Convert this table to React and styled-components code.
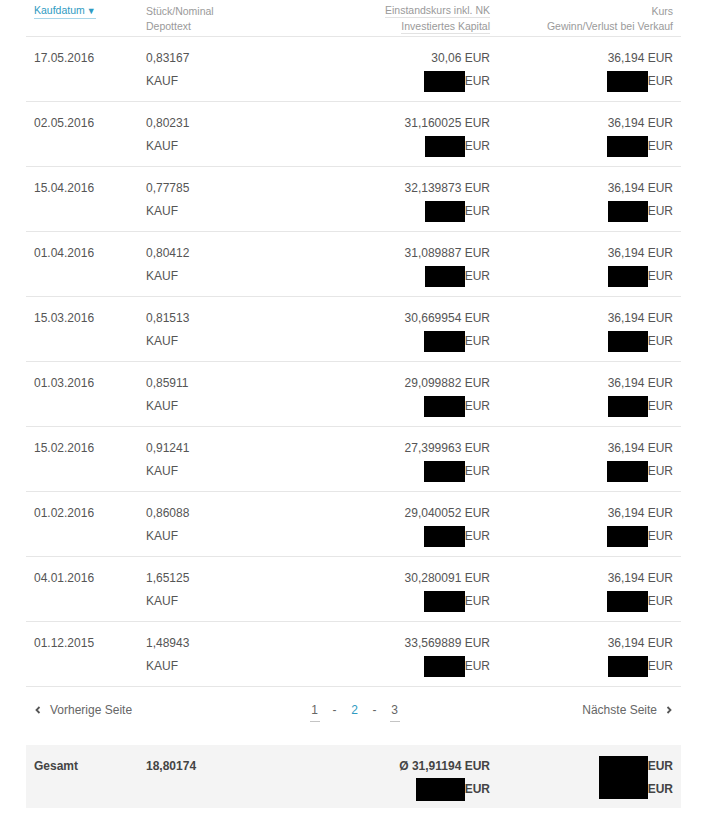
import styled, { createGlobalStyle } from "styled-components";

const Global = createGlobalStyle`
   body{
      margin: 0;
      background: #fff;
      font-family: "Liberation Sans", Arial, sans-serif;
      color: #555;
   }
`;

const Wrap = styled.div`
   width: 655px;
   margin-left: 26px;
`;

const Grid = styled.div`
   display: grid;
   grid-template-columns: 112px 160px 1fr 183px;
   padding: 0 8px;
`;

const HeadRow = styled(Grid)`
   height: 36px;
   border-bottom: 1px solid #e6e6e6;
   font-size: 10.5px;
   color: #9a9a9a;
`;

const HeadCell = styled.div`
   display: flex;
   flex-direction: column;
   align-items: ${p => p.$right ? "flex-end" : "flex-start"};
   padding-top: 4px;
   line-height: 15px;
`;

const SortLabel = styled.span`
   color: ${p => p.$active ? "#2f9bc2" : "#9a9a9a"};
   border-bottom: 1px solid ${p => p.$active ? "#a9d6e8" : "#e2e2e2"};
   line-height: 13px;
   margin-bottom: ${p => p.$active ? "0" : "2px"};
   & .arrow{
      font-size: 9px;
      margin-left: 2px;
   }
`;

const Row = styled(Grid)`
   border-bottom: 1px solid #e6e6e6;
   font-size: 12px;
   padding-top: 10px;
   box-sizing: border-box;
   height: 65px;
`;

const Cell = styled.div`
   display: flex;
   flex-direction: column;
   align-items: ${p => p.$right ? "flex-end" : "flex-start"};
   gap: 1px;
   & > span{
      height: 22px;
      line-height: 22px;
      display: flex;
      align-items: center;
   }
`;

const Redact = styled.i`
   display: inline-block;
   width: ${p => p.$w || 41}px;
   height: ${p => p.$h || 21}px;
   background: #000;
`;

const Pager = styled.div`
   display: flex;
   align-items: center;
   justify-content: space-between;
   height: 46px;
   padding: 0 8px;
   font-size: 12px;
   color: #666;
   margin-bottom: 12px;
`;

const PagerLink = styled.span`
   display: flex;
   align-items: center;
   gap: 8px;
   width: 160px;
   justify-content: ${p => p.$right ? "flex-end" : "flex-start"};
   & svg{
      width: 8px;
      height: 8px;
   }
`;

const Pages = styled.div`
   display: flex;
   gap: 12px;
   margin-left: 2px;
`;

const PageNum = styled.span`
   width: 8px;
   text-align: center;
   color: ${p => p.$current ? "#2f9bc2" : "#666"};
   position: relative;
   ${p => p.$link && `
      &::after{
         content: "";
         position: absolute;
         left: -1px;
         right: -1px;
         bottom: -5px;
         border-bottom: 1px solid #c4c4c4;
      }
   `}
`;

const Total = styled(Grid)`
   background: #f4f4f4;
   height: 63px;
   padding-top: 10px;
   box-sizing: border-box;
   font-size: 12px;
   font-weight: bold;
   color: #444;
`;

const TotalCell = styled(Cell)``;

const BigBox = styled.div`
   display: flex;
   align-items: center;
   & > div{
      display: flex;
      flex-direction: column;
      gap: 1px;
   }
   & span{
      height: 22px;
      line-height: 22px;
   }
`;

const rows = [
   ["17.05.2016", "0,83167", "30,06 EUR", 41, 41],
   ["02.05.2016", "0,80231", "31,160025 EUR", 40, 41],
   ["15.04.2016", "0,77785", "32,139873 EUR", 40, 40],
   ["01.04.2016", "0,80412", "31,089887 EUR", 40, 40],
   ["15.03.2016", "0,81513", "30,669954 EUR", 41, 40],
   ["01.03.2016", "0,85911", "29,099882 EUR", 41, 40],
   ["15.02.2016", "0,91241", "27,399963 EUR", 41, 41],
   ["01.02.2016", "0,86088", "29,040052 EUR", 41, 41],
   ["04.01.2016", "1,65125", "30,280091 EUR", 41, 41],
   ["01.12.2015", "1,48943", "33,569889 EUR", 41, 40],
];

const Chevron = ({ dir }) => (
   <svg viewBox="0 0 8 8">
      <path d={dir === "left" ? "M5.5 1 L2.5 4 L5.5 7" : "M2.5 1 L5.5 4 L2.5 7"} fill="none" stroke="#555" strokeWidth="1.8" />
   </svg>
);

export default function App() {
   return (
      <Wrap>
         <Global />
         <HeadRow>
            <HeadCell>
               <SortLabel $active>Kaufdatum<span className="arrow">▼</span></SortLabel>
            </HeadCell>
            <HeadCell>
               <span>Stück/Nominal</span>
               <span>Depottext</span>
            </HeadCell>
            <HeadCell $right>
               <SortLabel>Einstandskurs inkl. NK</SortLabel>
               <SortLabel>Investiertes Kapital</SortLabel>
            </HeadCell>
            <HeadCell $right>
               <span>Kurs</span>
               <span>Gewinn/Verlust bei Verkauf</span>
            </HeadCell>
         </HeadRow>
         {rows.map((r, i) => (
            <Row key={i}>
               <Cell><span>{r[0]}</span></Cell>
               <Cell>
                  <span>{r[1]}</span>
                  <span>KAUF</span>
               </Cell>
               <Cell $right>
                  <span>{r[2]}</span>
                  <span><Redact $w={r[3]} />EUR</span>
               </Cell>
               <Cell $right>
                  <span>36,194 EUR</span>
                  <span><Redact $w={r[4]} />EUR</span>
               </Cell>
            </Row>
         ))}
         <Pager>
            <PagerLink><Chevron dir="left" />Vorherige Seite</PagerLink>
            <Pages>
               <PageNum $link>1</PageNum>
               <PageNum>-</PageNum>
               <PageNum $current>2</PageNum>
               <PageNum>-</PageNum>
               <PageNum $link>3</PageNum>
            </Pages>
            <PagerLink $right>Nächste Seite<Chevron dir="right" /></PagerLink>
         </Pager>
         <Total>
            <TotalCell><span>Gesamt</span></TotalCell>
            <TotalCell><span>18,80174</span></TotalCell>
            <TotalCell $right>
               <span>Ø 31,91194 EUR</span>
               <span><Redact $w={49} $h={23} />EUR</span>
            </TotalCell>
            <TotalCell $right>
               <BigBox>
                  <Redact $w={49} $h={43} />
                  <div>
                     <span>EUR</span>
                     <span>EUR</span>
                  </div>
               </BigBox>
            </TotalCell>
         </Total>
      </Wrap>
   );
}
